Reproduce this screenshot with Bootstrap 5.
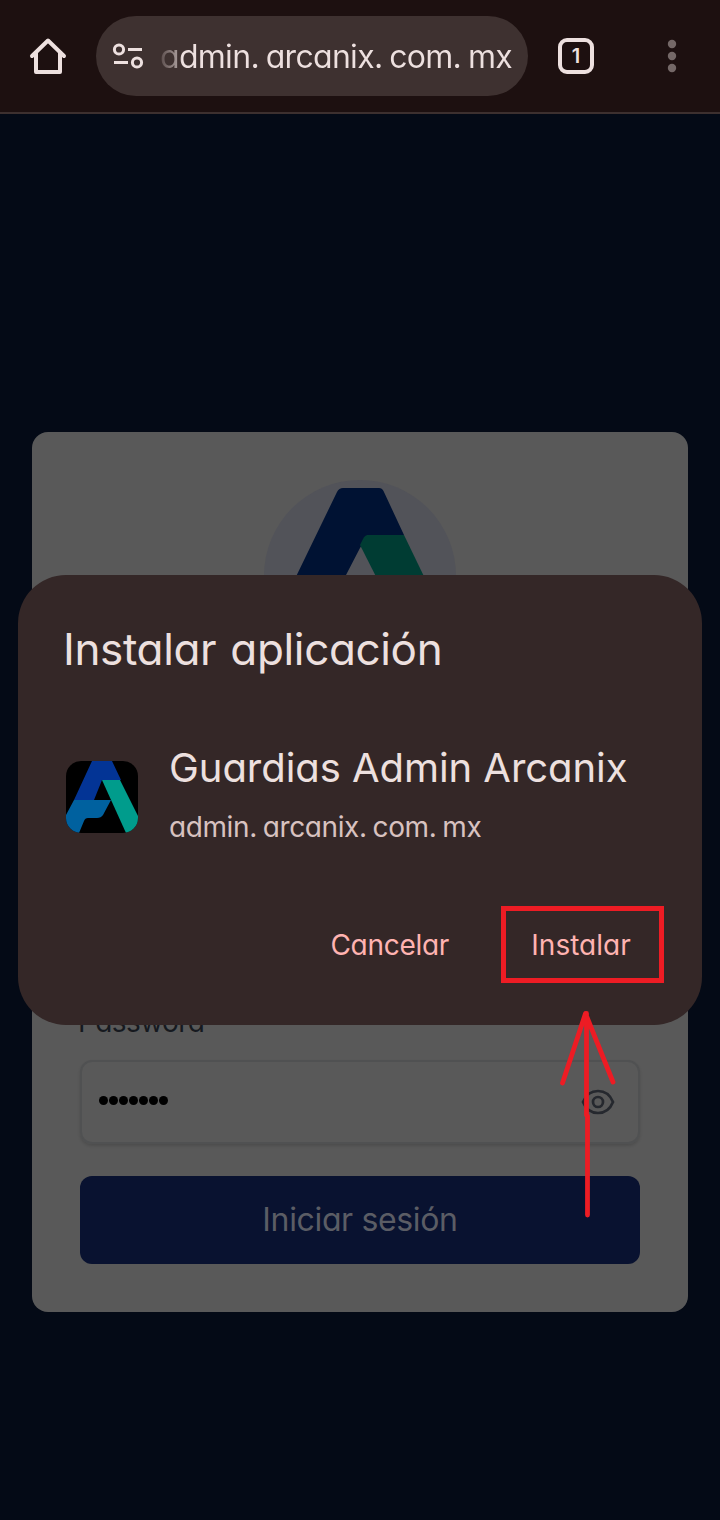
<!DOCTYPE html>
<html lang="es">
<head>
<meta charset="utf-8">
<meta name="viewport" content="width=device-width, initial-scale=1">
<title>Guardias Admin Arcanix</title>
<link href="https://cdn.jsdelivr.net/npm/bootstrap@5.3.0/dist/css/bootstrap.min.css" rel="stylesheet">
<style>
  body { font-family: Inter, "Open Sans", sans-serif; font-feature-settings: "cv11" 1; background: #040a16; color: #ede0df; height: 1520px; overflow: hidden; white-space: nowrap; }
  .browser-bar { height: 114px; background: #1d1010; border-bottom: 2px solid #3d302f; padding: 0 40px 0 28px; }
  .address { width: 432px; height: 80px; background: #3e3130; margin-left: 28px; padding-left: 16px; }
  .address-text { font-size: 32px; margin-left: 16px; line-height: 40px; padding-top: 2px; letter-spacing: -.7px; word-spacing: -1.500px;
    background: linear-gradient(90deg, #5a4c4b 0, #a79a99 18px, #ede0df 22px); -webkit-background-clip: text; background-clip: text; color: transparent; }
  .tab-count { width: 36px; height: 36px; border: 4px solid #ede0df; border-radius: 9px; font-size: 20px; font-weight: 600; line-height: 1; margin-left: 30px; padding-bottom: 1px; }
  .login { width: 656px; height: 880px; margin-top: 318px; padding: 48px; background: #595959; border-radius: 16px; }
  .brand-disc { width: 192px; height: 192px; background: #525359; }
  .field-label { color: #16191f; font-size: 28px; line-height: 40px; margin: 0 0 18px -2px; letter-spacing: -.55px; }
  .field { height: 84px; border: 2px solid #505152; border-radius: 12px; box-shadow: 0 2px 3px #0002; padding: 0 23px 0 16.500px; }
  .dots { gap: 1px; padding-bottom: 4px; }
  .dot { width: 9px; height: 9px; background: #000; }
  .submit { height: 88px; margin-top: 32px; padding-bottom: 1px; background: #091230; color: #5b5d65; border-radius: 12px; font-size: 32px; letter-spacing: -.35px; }
  .install { left: 18px; top: 574.500px; width: 684px; height: 450px; background: #342727; border-radius: 48px; padding: 46px 38px 41.500px 46px; z-index: 2; }
  .install-title { font-size: 44px; line-height: 56px; letter-spacing: -.35px; word-spacing: 2px; margin: 0 0 65px -1px; }
  .app-icon { margin: 8px 29px 0 0; }
  .app-name { font-size: 40px; line-height: 52px; letter-spacing: -.05px; }
  .app-host { font-size: 28px; line-height: 36px; margin-top: 15px; color: #d8c2c0; letter-spacing: -.4px; word-spacing: -1.500px; }
  .action { font-size: 28px; line-height: 36px; color: #ffb3b1; letter-spacing: -.3px; }
  .marked { width: 163px; height: 77px; border: 5px solid #ed1c24; margin-left: 52px; padding-right: 3px; }
  .marked .action { letter-spacing: 0; }
  .arrow { left: 555px; top: 1005px; z-index: 3; }
</style>
<script src="https://cdn.jsdelivr.net/npm/bootstrap@5.3.0/dist/js/bootstrap.bundle.min.js"></script>
</head>
<body class="position-relative">
<header class="browser-bar d-flex align-items-center">
  <svg width="40" height="40" viewBox="0 0 40 40" fill="none" stroke="#ede0df" stroke-width="4" stroke-linecap="round" stroke-linejoin="round"><path d="M4 20 20 4.500 36 20M8 17V36H32V17"/></svg>
  <div class="address rounded-pill d-flex align-items-center">
    <svg width="32" height="32" viewBox="0 0 32 32" fill="none" stroke="#ede0df" stroke-width="3"><circle cx="7" cy="9.500" r="4.600"/><path d="M16 9.500h14M2 22.500h14"/><circle cx="25" cy="22.500" r="4.600"/></svg>
    <span class="address-text">admin. arcanix. com. mx</span>
  </div>
  <div class="tab-count d-flex align-items-center justify-content-center">1</div>
  <svg class="ms-auto" width="16" height="40" viewBox="0 0 16 40" fill="#746867"><circle cx="8" cy="8" r="4.200"/><circle cx="8" cy="20" r="4.200"/><circle cx="8" cy="32" r="4.200"/></svg>
</header>

<main class="login mx-auto d-flex flex-column">
  <div class="brand-disc rounded-circle mx-auto">
    <svg width="192" height="192" viewBox="0 0 192 192"><path fill="#001233" d="M79 8h36q3 0 4.500 3L140 55H104L96 68 82 95 60 140H11L73 12q2-4 6-4Z"/><path fill="#003c33" d="M104 55H140L181 140H134L96 65 99 59Q101 55 104 55Z"/></svg>
  </div>
  <div class="field-label mt-auto">Password</div>
  <div class="field d-flex align-items-center justify-content-between">
    <div class="d-flex dots"><i class="dot rounded-circle"></i><i class="dot rounded-circle"></i><i class="dot rounded-circle"></i><i class="dot rounded-circle"></i><i class="dot rounded-circle"></i><i class="dot rounded-circle"></i><i class="dot rounded-circle"></i></div>
    <svg width="34" height="28" viewBox="0 0 34 28" fill="none" stroke="#25282e" stroke-width="2.700"><path d="M2 14C5 6.500 10.500 3 17 3S29 6.500 32 14C29 21.500 23.500 25 17 25S5 21.500 2 14Z"/><circle cx="17" cy="14" r="5"/></svg>
  </div>
  <div class="submit d-flex align-items-center justify-content-center">Iniciar sesión</div>
</main>

<section class="install position-absolute d-flex flex-column" role="dialog">
  <div class="install-title">Instalar aplicación</div>
  <div class="d-flex align-items-center">
    <svg class="app-icon" width="76" height="76" viewBox="-2 -2 76 76"><defs><clipPath id="tile"><rect width="72" height="72" rx="15"/></clipPath></defs><g clip-path="url(#tile)"><path fill="#000" d="M0 0h72v72H0z"/><path fill="#033495" d="M26 0H46L55 19H36L28 39H8Z"/><path fill="#00619f" d="M8 39H45L37 54Q35 57 31 57H22Q19 57 18 60L13 72H0V54Z"/><path fill="#009c8c" d="M36 19H54L74 59V72H60Z"/></g></svg>
    <div><div class="app-name">Guardias Admin Arcanix</div><div class="app-host">admin. arcanix. com. mx</div></div>
  </div>
  <div class="d-flex justify-content-end align-items-center mt-auto">
    <span class="action">Cancelar</span>
    <div class="marked d-flex align-items-center justify-content-center"><span class="action">Instalar</span></div>
  </div>
</section>
<svg class="arrow position-absolute" width="65" height="218" viewBox="0 0 65 218" fill="none" stroke="#ed1c24" stroke-width="4.800" stroke-linecap="round" stroke-linejoin="round"><path d="M7.500 78 30.500 8.500 58 77M31.500 8.500V110L32.500 111V210"/></svg>
</body>
</html>
